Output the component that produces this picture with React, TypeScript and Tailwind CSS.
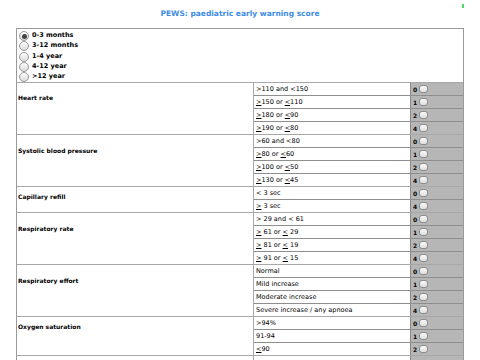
import React from "react";

type Opt = { score: number; text: React.ReactNode };
type Section = { label: string; pt: string; options: Opt[] };

const ge = <u>&gt;</u>;
const le = <u>&lt;</u>;

const sections: Section[] = [
  {
    label: "Heart rate",
    pt: "pt-[11px]",
    options: [
      { score: 0, text: <>&gt;110 and &lt;150</> },
      { score: 1, text: <>{ge}150 or {le}110</> },
      { score: 2, text: <>{ge}180 or {le}90</> },
      { score: 4, text: <>{ge}190 or {le}80</> },
    ],
  },
  {
    label: "Systolic blood pressure",
    pt: "pt-[12px]",
    options: [
      { score: 0, text: <>&gt;60 and &lt;80</> },
      { score: 1, text: <>{ge}80 or {le}60</> },
      { score: 2, text: <>{ge}100 or {le}50</> },
      { score: 4, text: <>{ge}130 or {le}45</> },
    ],
  },
  {
    label: "Capillary refill",
    pt: "pt-[6px]",
    options: [
      { score: 0, text: <>&lt; 3 sec</> },
      { score: 4, text: <>{ge} 3 sec</> },
    ],
  },
  {
    label: "Respiratory rate",
    pt: "pt-[12px]",
    options: [
      { score: 0, text: <>&gt; 29 and &lt; 61</> },
      { score: 1, text: <>{ge} 61 or {le} 29</> },
      { score: 2, text: <>{ge} 81 or {le} 19</> },
      { score: 4, text: <>{ge} 91 or {le} 15</> },
    ],
  },
  {
    label: "Respiratory effort",
    pt: "pt-[12px]",
    options: [
      { score: 0, text: "Normal" },
      { score: 1, text: "Mild increase" },
      { score: 2, text: "Moderate increase" },
      { score: 4, text: "Severe increase / any apnoea" },
    ],
  },
  {
    label: "Oxygen saturation",
    pt: "pt-[6px]",
    options: [
      { score: 0, text: ">94%" },
      { score: 1, text: "91-94" },
      { score: 2, text: <>{le}90</> },
    ],
  },
];

const ages = ["0-3 months", "3-12 months", "1-4 year", "4-12 year", ">12 year"];

const Radio = ({ checked }: { checked: boolean }) => (
  <span className="w-[10px] h-[10px] rounded-full border border-[#999] bg-gradient-to-b from-[#fdfdfd] to-[#dcdcdc] flex items-center justify-center shrink-0">
    {checked && <span className="w-[5px] h-[5px] rounded-full bg-[#444]" />}
  </span>
);

const Box = () => (
  <span className="w-[9px] h-[8px] rounded-[3px] border border-[#8c8c8c] bg-gradient-to-b from-[#fafafa] to-[#dedede] inline-block" />
);

const App = () => {
  return (
    <div className="w-[480px] h-[360px] overflow-hidden bg-white relative font-['DejaVu_Sans',Verdana,sans-serif] text-black">
      <div className="absolute left-[462px] top-[4px] w-[2px] h-[4px] bg-[#4cd964]" />
      <h1 className="text-center text-[7.5px] font-bold text-[#3d8be6] pt-[9px] h-[28px] leading-[10px]">
        PEWS: paediatric early warning score
      </h1>
      <div className="ml-[16px] w-[448px] border border-[#9a9a9a]">
        <div className="h-[53px] pt-[2px] pl-[2px] flex flex-col">
          {ages.map((a, i) => (
            <label key={a} className="flex items-center gap-[3px] h-[10.3px] text-[6.5px] font-bold">
              <Radio checked={i === 0} />
              {a}
            </label>
          ))}
        </div>
        {sections.map((s) => (
          <div key={s.label} className="flex">
            <div className={`w-[236px] pl-[1px] text-[6px] font-bold leading-[8px] border-t border-[#a8a8a8] ${s.pt}`}>
              {s.label}
            </div>
            <div className="flex-1 border-l border-[#a8a8a8]">
              {s.options.map((o, i) => (
                <div
                  key={i}
                  className={`flex h-[13px] border-t ${i === 0 ? "border-[#a8a8a8]" : "border-[#8e8e8e]"}`}
                >
                  <div className="w-[156px] pl-[2px] text-[6.5px] leading-[12px] bg-white">{o.text}</div>
                  <div className="flex-1 flex items-center gap-[2px] pl-[2px] bg-[#b6b6b6] border-l border-[#8a8a8a] text-[6px] font-bold">
                    {o.score}
                    <Box />
                  </div>
                </div>
              ))}
            </div>
          </div>
        ))}
        <div className="flex border-t border-[#a8a8a8] h-[20px]">
          <div className="w-[236px]" />
          <div className="flex-1 border-l border-[#a8a8a8] flex">
            <div className="w-[156px]" />
            <div className="flex-1 bg-[#b6b6b6] border-l border-[#8a8a8a]" />
          </div>
        </div>
      </div>
    </div>
  );
};

export default App;
